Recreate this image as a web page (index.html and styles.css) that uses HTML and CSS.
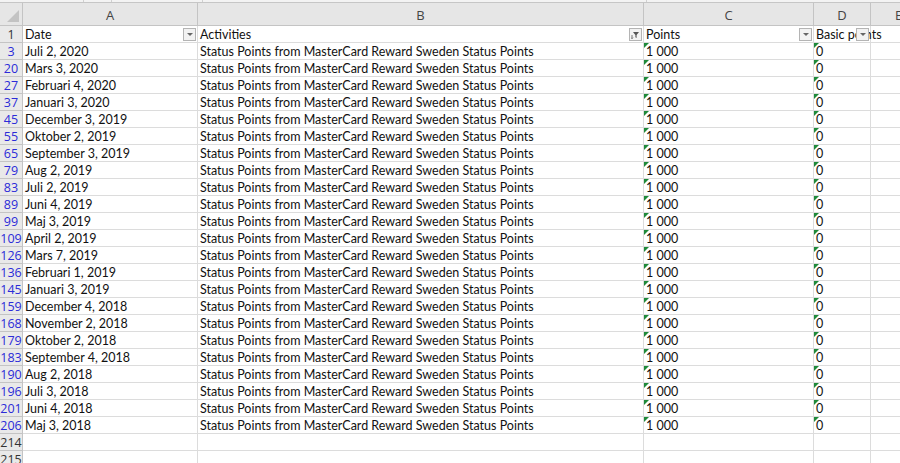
FILE: index.html
```html
<!DOCTYPE html>
<html lang="en">
  <head>
    <meta charset="UTF-8">
    <title>Status Points</title>
    <link rel="stylesheet" href="styles.css">
  </head>
<body>
  <div class="strip">
    <span class="seg s1"></span>
    <span class="seg s2"></span>
    <span class="seg s3"></span>
    <span class="seg s4"></span>
  </div>

  <div class="sheet">
    <div class="corner"><span class="all"></span></div>
    <div class="colhead">A</div>
    <div class="colhead">B</div>
    <div class="colhead">C</div>
    <div class="colhead">D</div>
    <div class="colhead last">E</div>

    <div class="rowhead plain">1</div>
    <div class="cell head">Date<span class="drop"><i class="arrow"></i></span></div>
    <div class="cell head">Activities<span class="drop">
      <svg width="10" height="10" viewBox="0 0 10 10">
        <path d="M2 2h6L5.6 5v3l-1.2-.8V5z" fill="#555"/>
        <path d="M1 5v3.6M0 7.6l1 1 1-1" stroke="#555" stroke-width="0.8" fill="none"/>
      </svg>
    </span></div>
    <div class="cell head">Points<span class="drop"><i class="arrow"></i></span></div>
    <div class="cell head over">Basic points<span class="drop"><i class="arrow"></i></span></div>
    <div class="cell last"></div>
  </div>

<script>
;(function () {
"use strict"
const sheet = document.querySelector(".sheet")
const activity = "Status Points from MasterCard Reward Sweden Status Points"

// row number, date; every one of them is the same monthly points entry
const rows = [
  [3, "Juli 2, 2020"],
  [20, "Mars 3, 2020"],
  [27, "Februari 4, 2020"],
  [37, "Januari 3, 2020"],
  [45, "December 3, 2019"],
  [55, "Oktober 2, 2019"],
  [65, "September 3, 2019"],
  [79, "Aug 2, 2019"],
  [83, "Juli 2, 2019"],
  [89, "Juni 4, 2019"],
  [99, "Maj 3, 2019"],
  [109, "April 2, 2019"],
  [126, "Mars 7, 2019"],
  [136, "Februari 1, 2019"],
  [145, "Januari 3, 2019"],
  [159, "December 4, 2018"],
  [168, "November 2, 2018"],
  [179, "Oktober 2, 2018"],
  [183, "September 4, 2018"],
  [190, "Aug 2, 2018"],
  [196, "Juli 3, 2018"],
  [201, "Juni 4, 2018"],
  [206, "Maj 3, 2018"],
]

function cell(text, className) {
  const div = document.createElement("div")
  div.className = className
  div.textContent = text
  sheet.append(div)
}

rows.forEach(([ number, date ]) => {
  cell(number, "rowhead")
  cell(date, "cell")
  cell(activity, "cell")
  cell("1 000", "cell text-number")
  cell("0", "cell text-number")
  cell("", "cell last")
})

// empty rows below the filtered range
;[214, 215].forEach(number => {
  cell(number, "rowhead plain")
  for (let i = 0; i < 4; i++) cell("", "cell")
  cell("", "cell last")
})
})()
</script>
</body>
</html>
```

FILE: styles.css
```css
body {
  margin: 0;
  overflow: hidden;
  background-color: #fff;
  font-family: Lato, "Liberation Sans", sans-serif;
}
.strip {
  display: flex;
  height: 2px;
  background-color: #f3f3f3;
  border-bottom: 1px solid #c6c6c6;
}
.seg {
  border-right: 1px solid #d0d0d0;
}
.s1 { width: 83px; }
.s2 { width: 27px; }
.s3 { width: 90px; }
.s4 { width: 443px; }

.sheet {
  display: grid;
  grid-template-columns: 23px 175px 446px 170px 57px 1fr;
  grid-template-rows: 23px;
  grid-auto-rows: 17px;
}
.corner,
.colhead,
.rowhead {
  box-sizing: border-box;
  background-color: #e6e6e6;
  color: #444;
  border-right: 1px solid #c4c4c4;
  border-bottom: 1px solid #c4c4c4;
}
.corner {
  position: relative;
}
.all {
  position: absolute;
  right: 3px;
  bottom: 3px;
  width: 0;
  height: 0;
  border-left: 12px solid transparent;
  border-bottom: 12px solid #c3c3c3;
}
.colhead {
  text-align: center;
  font-family: "Open Sans", sans-serif;
  font-size: 13px;
  line-height: 24px;
}
.colhead.last {
  text-align: left;
  padding-left: 24px;
  border-right: none;
}
.rowhead {
  text-align: center;
  font-family: "Open Sans", sans-serif;
  font-size: 12.5px;
  line-height: 17px;
  color: #2b2bd8;
  background-color: #e9e9e9;
}
.rowhead.plain {
  color: #333;
}
.cell {
  position: relative;
  box-sizing: border-box;
  padding: 1px 0 0 2px;
  border-right: 1px solid #dcdcdc;
  border-bottom: 1px solid #dcdcdc;
  font-size: 12.5px;
  line-height: 16px;
  color: #111;
  white-space: nowrap;
}
.cell.last {
  border-right: none;
}
.cell.over {
  overflow: visible;
  z-index: 1;
}
.drop {
  position: absolute;
  top: 2px;
  right: 1px;
  width: 11px;
  height: 11px;
  display: flex;
  align-items: center;
  justify-content: center;
  background-color: #f2f2f2;
  border: 1px solid #b4b4b4;
}
.arrow {
  width: 0;
  height: 0;
  border-left: 3px solid transparent;
  border-right: 3px solid transparent;
  border-top: 3px solid #666;
}
/* numbers stored as text get the green corner flag */
.text-number::before {
  content: "";
  position: absolute;
  left: 0;
  top: 0;
  border-top: 5px solid #1f8a3a;
  border-right: 5px solid transparent;
}
```
